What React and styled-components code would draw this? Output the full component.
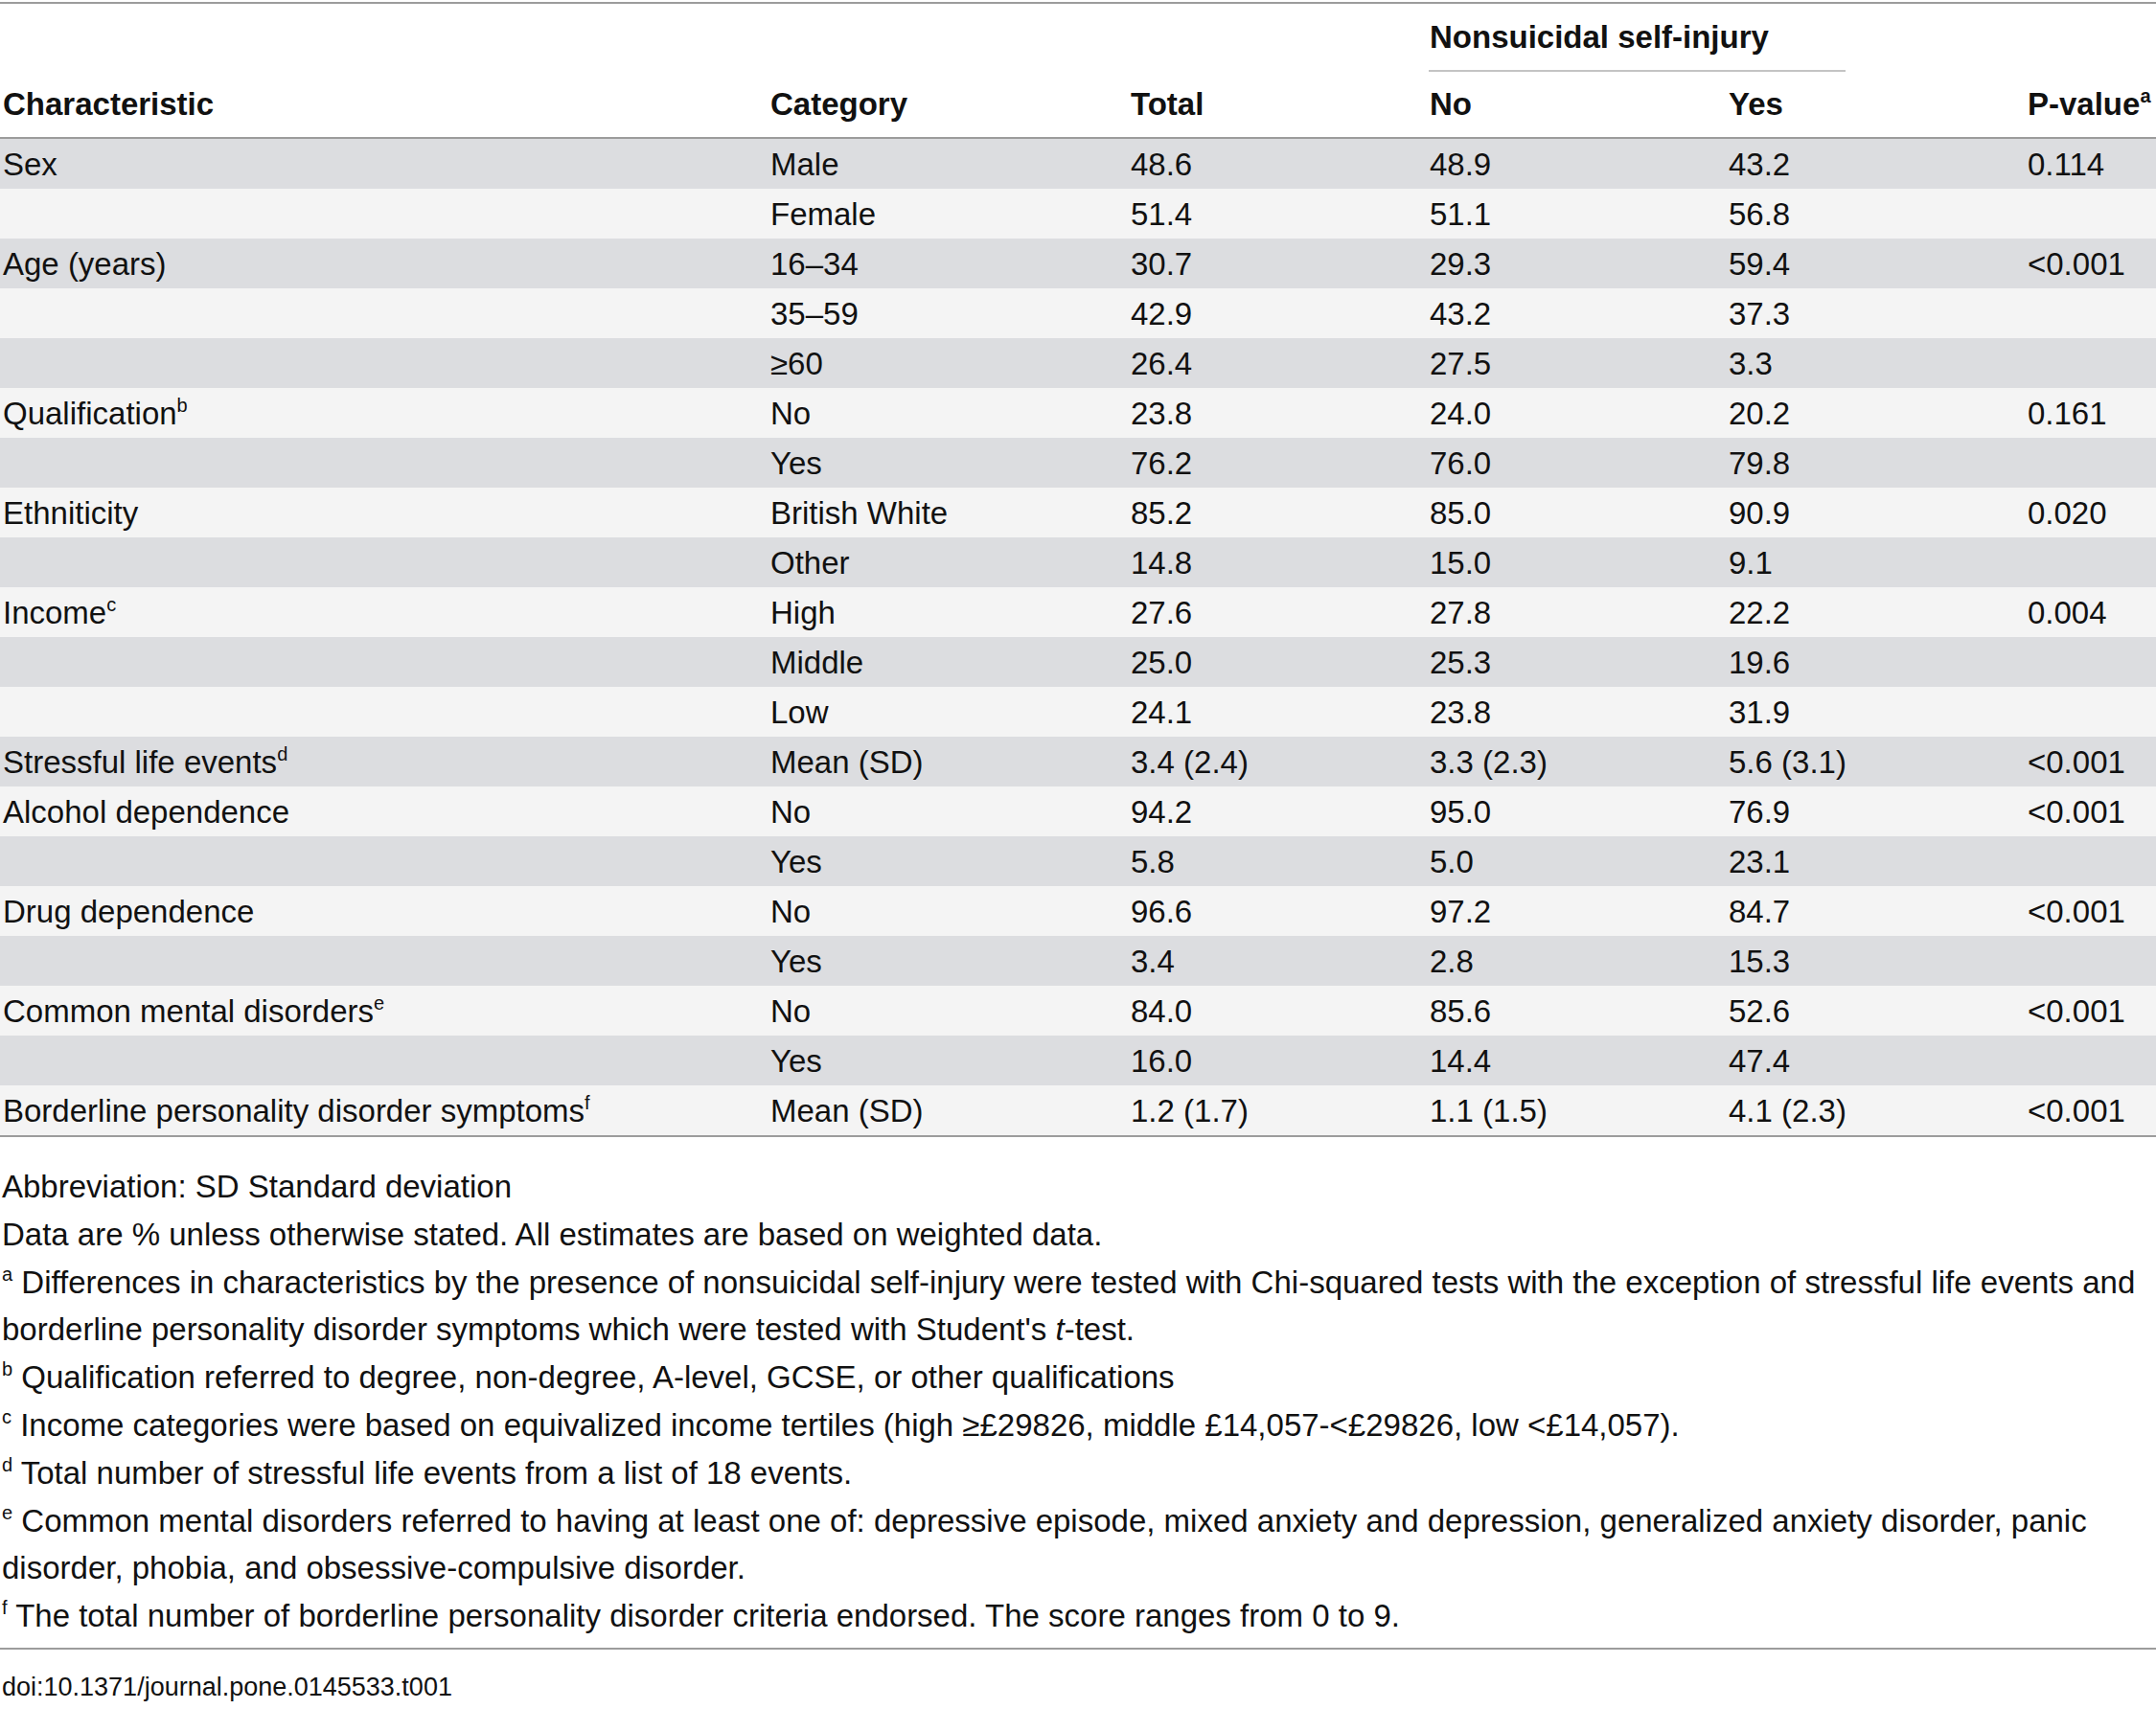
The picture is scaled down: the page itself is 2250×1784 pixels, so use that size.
import styled, { createGlobalStyle } from "styled-components";

const GlobalStyle = createGlobalStyle`
  html, body {
    margin: 0;
    padding: 0;
    background: #ffffff;
  }
  body {
    font-family: "Liberation Sans", Arial, sans-serif;
    color: #111111;
  }
`;

const Page = styled.div`
  width: 2250px;
  padding-top: 2px;
`;

const Table = styled.table`
  width: 2250px;
  table-layout: fixed;
  border-collapse: collapse;
  border-top: 2px solid #9c9c9c;
  border-bottom: 2px solid #9c9c9c;
  font-size: 33px;
`;

const HeadCell = styled.th`
  text-align: left;
  font-weight: bold;
  padding: 0 0 0 3px;
  height: ${({ $h }) => $h}px;
  vertical-align: middle;
  white-space: nowrap;
  border-bottom: ${({ $rule }) => ($rule ? "2px solid #9c9c9c" : "none")};
`;

const SpanLabel = styled.div`
  width: 435px;
  height: 70px;
  display: flex;
  align-items: center;
  border-bottom: 2px solid #c4c4c4;
  box-sizing: border-box;
  margin-left: -1px;
  padding-left: 1px;
`;

const Row = styled.tr`
  background: ${({ $dark }) => ($dark ? "#dcdde0" : "#f4f4f4")};
`;

const Cell = styled.td`
  padding: 2px 0 0 3px;
  height: 50px;
  line-height: 50px;
  white-space: nowrap;
  vertical-align: middle;
`;

const Sup = styled.sup`
  font-size: 20px;
  line-height: 0;
  vertical-align: 0;
  position: relative;
  top: -13px;
`;

const Notes = styled.div`
  margin-top: 27px;
  font-size: 33px;
  line-height: 49.8px;
  padding-left: 2px;
  padding-right: 18px;
  padding-bottom: 8px;
  border-bottom: 2px solid #9c9c9c;
`;

const Note = styled.p`
  margin: 0;
`;

const Doi = styled.div`
  padding-left: 2px;
  margin-top: 19px;
  font-size: 27px;
  line-height: 40px;
`;

const rows = [
  ["Sex", "Male", "48.6", "48.9", "43.2", "0.114"],
  ["", "Female", "51.4", "51.1", "56.8", ""],
  ["Age (years)", "16–34", "30.7", "29.3", "59.4", "<0.001"],
  ["", "35–59", "42.9", "43.2", "37.3", ""],
  ["", "≥60", "26.4", "27.5", "3.3", ""],
  [["Qualification", "b"], "No", "23.8", "24.0", "20.2", "0.161"],
  ["", "Yes", "76.2", "76.0", "79.8", ""],
  ["Ethniticity", "British White", "85.2", "85.0", "90.9", "0.020"],
  ["", "Other", "14.8", "15.0", "9.1", ""],
  [["Income", "c"], "High", "27.6", "27.8", "22.2", "0.004"],
  ["", "Middle", "25.0", "25.3", "19.6", ""],
  ["", "Low", "24.1", "23.8", "31.9", ""],
  [["Stressful life events", "d"], "Mean (SD)", "3.4 (2.4)", "3.3 (2.3)", "5.6 (3.1)", "<0.001"],
  ["Alcohol dependence", "No", "94.2", "95.0", "76.9", "<0.001"],
  ["", "Yes", "5.8", "5.0", "23.1", ""],
  ["Drug dependence", "No", "96.6", "97.2", "84.7", "<0.001"],
  ["", "Yes", "3.4", "2.8", "15.3", ""],
  [["Common mental disorders", "e"], "No", "84.0", "85.6", "52.6", "<0.001"],
  ["", "Yes", "16.0", "14.4", "47.4", ""],
  [["Borderline personality disorder symptoms", "f"], "Mean (SD)", "1.2 (1.7)", "1.1 (1.5)", "4.1 (2.3)", "<0.001"],
];

const Label = ({ value }) =>
  Array.isArray(value) ? (
    <>
      {value[0]}
      <Sup>{value[1]}</Sup>
    </>
  ) : (
    value
  );

export default function App() {
  return (
    <Page>
      <GlobalStyle />
      <Table>
        <colgroup>
          <col style={{ width: 801 }} />
          <col style={{ width: 376 }} />
          <col style={{ width: 312 }} />
          <col style={{ width: 312 }} />
          <col style={{ width: 312 }} />
          <col style={{ width: 137 }} />
        </colgroup>
        <thead>
          <tr>
            <HeadCell $h={71} />
            <HeadCell $h={71} />
            <HeadCell $h={71} />
            <HeadCell $h={71} colSpan={2}>
              <SpanLabel>Nonsuicidal self-injury</SpanLabel>
            </HeadCell>
            <HeadCell $h={71} />
          </tr>
          <tr>
            <HeadCell $h={68} $rule>Characteristic</HeadCell>
            <HeadCell $h={68} $rule>Category</HeadCell>
            <HeadCell $h={68} $rule>Total</HeadCell>
            <HeadCell $h={68} $rule>No</HeadCell>
            <HeadCell $h={68} $rule>Yes</HeadCell>
            <HeadCell $h={68} $rule>
              P-value<Sup>a</Sup>
            </HeadCell>
          </tr>
        </thead>
        <tbody>
          {rows.map((r, i) => (
            <Row key={i} $dark={i % 2 === 0}>
              <Cell>
                <Label value={r[0]} />
              </Cell>
              {r.slice(1).map((v, j) => (
                <Cell key={j}>{v}</Cell>
              ))}
            </Row>
          ))}
        </tbody>
      </Table>
      <Notes>
        <Note>Abbreviation: SD Standard deviation</Note>
        <Note>Data are % unless otherwise stated. All estimates are based on weighted data.</Note>
        <Note>
          <Sup>a</Sup> Differences in characteristics by the presence of nonsuicidal self-injury were tested with
          Chi-squared tests with the exception of stressful life events and borderline personality disorder
          symptoms which were tested with Student's <i>t</i>-test.
        </Note>
        <Note>
          <Sup>b</Sup> Qualification referred to degree, non-degree, A-level, GCSE, or other qualifications
        </Note>
        <Note>
          <Sup>c</Sup> Income categories were based on equivalized income tertiles (high ≥£29826, middle
          £14,057-&lt;£29826, low &lt;£14,057).
        </Note>
        <Note>
          <Sup>d</Sup> Total number of stressful life events from a list of 18 events.
        </Note>
        <Note>
          <Sup>e</Sup> Common mental disorders referred to having at least one of: depressive episode, mixed
          anxiety and depression, generalized anxiety disorder, panic disorder, phobia, and obsessive-compulsive
          disorder.
        </Note>
        <Note>
          <Sup>f</Sup> The total number of borderline personality disorder criteria endorsed. The score ranges from
          0 to 9.
        </Note>
      </Notes>
      <Doi>doi:10.1371/journal.pone.0145533.t001</Doi>
    </Page>
  );
}
